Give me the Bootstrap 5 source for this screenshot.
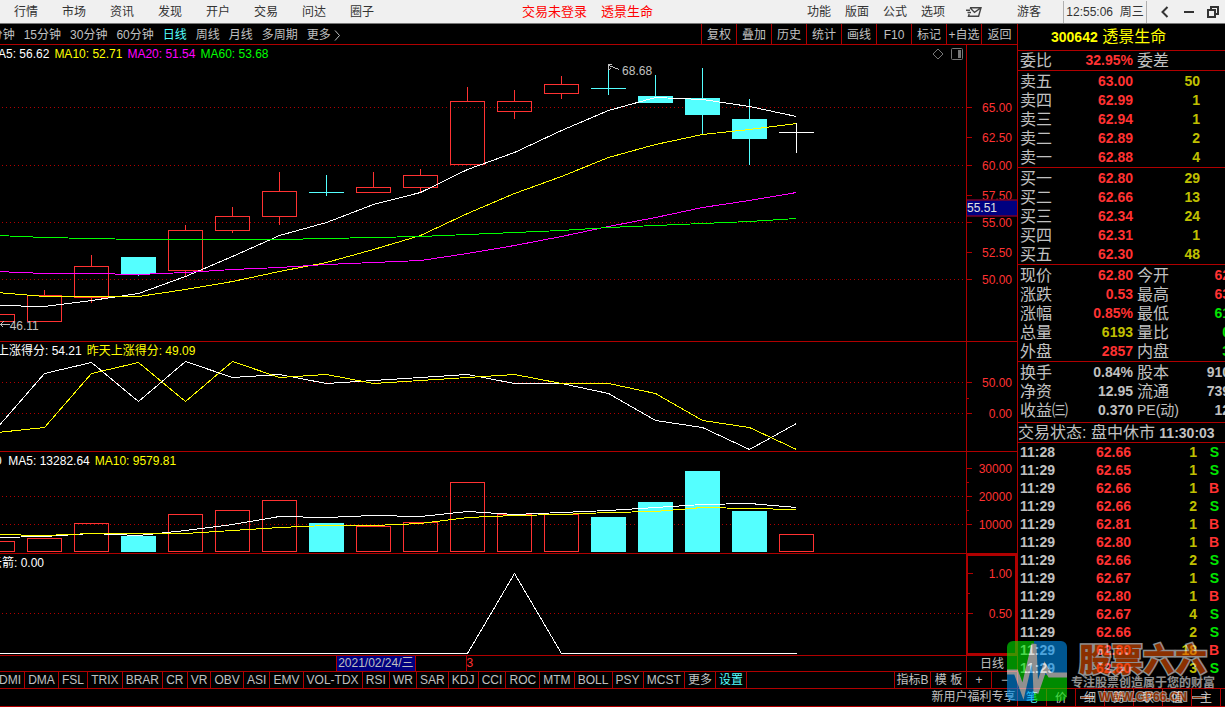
<!DOCTYPE html>
<html lang="zh-CN">
<head>
<meta charset="utf-8">
<meta name="viewport" content="width=device-width, initial-scale=1">
<title>300642 透景生命</title>
<link href="https://cdn.jsdelivr.net/npm/bootstrap@5.3.0/dist/css/bootstrap.min.css" rel="stylesheet">
<style>
:root { --line:#b00000; --up:#ff3232; --down:#54ffff; --txt:#c0c0c0; --vol:#c0c000; --lime:#00e600; }
body { background:#fff; color:var(--txt); font:12px/16px "Liberation Sans","Noto Sans CJK SC",sans-serif; }
button, a.tool { background:none; border:0; padding:0; color:inherit; font:inherit; text-decoration:none; white-space:nowrap; }
.app { height:100vh; min-height:560px; padding-bottom:2px; overflow:hidden; }
.topbar { height:24px; background:#f0f0f0; color:#333; border-bottom:1px solid #777; }
.topbar .menu { padding-left:2px; }
.topbar .menu button { width:48px; }
.topbar .tools { padding-left:11px; }
.topbar .tools button { width:38px; }
.topbar .tools .mail { width:43px; }
.topbar .tools .guest { width:68px; }
.topbar .notice { font-size:13px; color:#f00; gap:14px; }
.clock { width:84px; border:1px solid #b0b0b0; border-width:0 1px; height:22px; line-height:22px; }
.winctl { padding-left:6px; }
.topbar .winctl button { width:24px; }
.work { background:#000; min-height:0; }
.r-b { border-bottom:1px solid var(--line); }
.r-l { border-left:1px solid var(--line); }
.r-r { border-right:1px solid var(--line); }
.periods { height:21px; }
.periods button { padding-top:1px; }
.periods .span-list { gap:9px; margin-left:-16px; }
.cell35 { width:35px; }
.cell36 { width:36px; }
.picked { color:var(--down); }
.pane { min-height:0; position:relative; }
.pane-k { flex:296 1 0; } .pane-s { flex:109 1 0; } .pane-v { flex:101 1 0; }
.plot { position:relative; overflow:hidden; min-width:0; }
.plot svg.canvas { position:absolute; inset:0; width:100%; height:100%; display:block; }
.legend { position:relative; gap:5px; line-height:18px; white-space:nowrap; }
.axis { width:51px; }
.axis svg { display:block; width:100%; height:100%; }
.axis text { fill:var(--up); font-size:12px; text-anchor:end; }
.axis.focus-axis { border:2px solid var(--line); }
.tagged { position:absolute; transform:translateY(-50%); line-height:12px; }
.cursor-price { position:absolute; right:0; width:50px; height:17px; line-height:15px; background:#000080; border:1px solid var(--line); border-width:1px 0; color:#e0e0e0; transform:translateY(-50%); }
.corner { position:absolute; right:2px; top:3px; gap:7px; }
.dates { height:16px; }
.dates .mark-at { position:absolute; top:0; height:15px; line-height:15px; white-space:nowrap; }
.dates .chosen { background:#000080; padding:0 1px; }
.indis { height:17px; }
.indis .list { width:84%; margin-left:-4px; }
.indis .list button { flex:1 0 auto; padding:0 3px; border-right:1px solid var(--line); }
.w24 { width:24px; } .w25 { width:25px; } .w26 { width:26px; } .w50 { width:50px; } .w87 { width:87px; }
.foot { height:18px; }
.side { width:208px; flex:none; overflow:hidden; }
.side h1 { height:27px; font-size:16px; line-height:26px; color:#ff0; padding-left:33px; margin:0; font-weight:400; white-space:nowrap; }
.side h1 b, .side .num, .status b { font-size:14px; font-weight:700; }
.quotes { width:212px; table-layout:fixed; border-collapse:collapse; }
.quotes td, .quotes th { padding:0; height:19px; line-height:19px; font-size:16px; font-weight:400; vertical-align:middle; white-space:nowrap; }
.quotes .num { text-align:right; }
.quotes th { padding-left:2px; }
.quotes .second { padding-left:4px; }
.quotes .latin { font-size:14px; }
.box1 { padding-top:1px; } .box2 { padding:1px 0 2px; }
.status { height:20px; line-height:19px; font-size:16px; white-space:nowrap; }
.ticks { min-height:0; overflow:hidden; }
.ticks td { height:18px; line-height:18px; }
.ticks .num { padding-right:3px; }
.ticks .num.first { text-align:left; padding-left:2px; }
.up { color:var(--up); } .dn { color:var(--lime); } .vo { color:var(--vol); }
.tabs7 button { width:29px; border-right:1px solid var(--line); }
.wm { position:absolute; right:10px; bottom:6px; opacity:.6; pointer-events:none; z-index:5; white-space:nowrap; }
.wm-name { font:900 32px/32px "Noto Sans CJK SC",sans-serif; color:#e85000; -webkit-text-stroke:3px #f0f0f0; paint-order:stroke fill; }
.wm-sub { font:700 12px/18px "Noto Sans CJK SC",sans-serif; color:#f0f0f0; }
.wm-url { font:700 12px/12px "Liberation Sans",sans-serif; color:#e85000; -webkit-text-stroke:2px #f0f0f0; paint-order:stroke fill; gap:5px; }
.wm-url i { width:14px; height:3px; background:#e85000; border:1px solid #f0f0f0; }
</style>
</head>
<body>
<div class="app d-flex flex-column position-relative">
  <header class="topbar d-flex align-items-center flex-shrink-0">
    <nav class="menu d-flex"><button>行情</button><button>市场</button><button>资讯</button><button>发现</button><button>开户</button><button>交易</button><button>问达</button><button>圈子</button></nav>
    <div class="notice flex-grow-1 d-flex justify-content-center"><button>交易未登录</button><button>透景生命</button></div>
    <div class="tools d-flex align-items-center">
      <button>功能</button><button>版面</button><button>公式</button><button>选项</button>
      <button class="mail" aria-label="消息"><svg width="16" height="10" viewBox="0 0 16 10" fill="none" stroke="#444" stroke-width="1.4"><path d="M4 .8H15L12.600 9.200H2.500L3.200 7M4 .8L8.500 5.400L15 .8M0 3.200H4M1.500 5.500H5"/></svg></button>
      <button class="guest">游客</button>
    </div>
    <div class="clock text-center">12:55:06&nbsp; 周三</div>
    <div class="winctl d-flex">
      <button aria-label="返回"><svg width="8" height="12" viewBox="0 0 8 12" fill="none" stroke="#333" stroke-width="2"><path d="M6.500 1L1.500 6L6.500 11"/></svg></button>
      <button aria-label="最小化"><svg width="10" height="12" viewBox="0 0 10 12"><path d="M0 5H10V7H0Z" fill="#333"/></svg></button>
      <button aria-label="还原"><svg width="12" height="12" viewBox="0 0 12 12" fill="none" stroke="#333" stroke-width="2"><path d="M1 4H8V11H1ZM4 4V1H11V8H8"/></svg></button>
    </div>
  </header>

  <div class="work d-flex flex-grow-1">
    <main class="d-flex flex-column flex-grow-1" style="min-width:0">
      <div class="periods r-b d-flex overflow-hidden">
        <div class="span-list d-flex flex-grow-1">
          <button>5分钟</button><button>15分钟</button><button>30分钟</button><button>60分钟</button><button class="picked">日线</button><button>周线</button><button>月线</button><button>多周期</button><button>更多 <svg width="7" height="11" viewBox="0 0 7 11" fill="none" stroke="#c0c0c0"><path d="M1 .5L5.500 5.500L1 10.500"/></svg></button>
        </div>
        <button class="cell35 r-l">复权</button><button class="cell35 r-l">叠加</button><button class="cell35 r-l">历史</button><button class="cell35 r-l">统计</button><button class="cell35 r-l">画线</button><button class="cell35 r-l">F10</button><button class="cell35 r-l">标记</button><button class="cell35 r-l">+自选</button><button class="cell36 r-l">返回</button>
      </div>

      <section class="pane pane-k r-b d-flex">
        <div class="plot flex-grow-1">
          <svg class="canvas" id="kline"></svg>
          <div class="legend d-flex" style="margin-left:-12px"><span style="color:#fff">MA5: 56.62</span><span style="color:#ff0">MA10: 52.71</span><span style="color:#f0f">MA20: 51.54</span><span style="color:#0f0">MA60: 53.68</span></div>
          <span class="tagged" style="left:64.4%;top:8.8%">68.68</span>
          <span class="tagged" style="left:1%;top:94.9%">46.11</span>
          <div class="corner d-flex">
            <svg width="12" height="12" viewBox="0 0 12 12" fill="none" stroke="#777"><path d="M6 1L11 6L6 11L1 6Z"/></svg>
            <svg width="13" height="12" viewBox="0 0 13 12" fill="none" stroke="#777"><rect x=".5" y=".5" width="11" height="11" rx="1"/><path d="M7 2H10V10H7Z" fill="#777" stroke="none"/></svg>
          </div>
        </div>
        <div class="axis r-l" id="kline-axis"></div>
        <div class="cursor-price" style="top:55.1%">55.51</div>
      </section>
      <section class="pane pane-s r-b d-flex">
        <div class="plot flex-grow-1">
          <svg class="canvas" id="score"></svg>
          <div class="legend d-flex" style="margin-left:-3px"><span style="color:#fff">上涨得分: 54.21</span><span style="color:#ff0">昨天上涨得分: 49.09</span></div>
        </div>
        <div class="axis r-l" id="score-axis"></div>
      </section>
      <section class="pane pane-v r-b d-flex">
        <div class="plot flex-grow-1">
          <svg class="canvas" id="volume"></svg>
          <div class="legend d-flex" style="margin-left:-5px"><span style="color:#fff">0 &nbsp;MA5: 13282.64</span><span style="color:#ff0">MA10: 9579.81</span></div>
        </div>
        <div class="axis r-l" id="volume-axis"></div>
      </section>
      <section class="pane pane-v r-b d-flex">
        <div class="plot flex-grow-1">
          <svg class="canvas" id="arrow"></svg>
          <div class="legend d-flex" style="margin-left:-10px"><span style="color:#fff">云箭: 0.00</span></div>
        </div>
        <div class="axis focus-axis" id="arrow-axis"></div>
      </section>

      <div class="dates r-b d-flex">
        <div class="position-relative flex-grow-1">
          <span class="mark-at chosen r-l r-r" style="left:34.8%">2021/02/24/三</span>
          <span class="mark-at r-l up" style="left:48.2%">3</span>
        </div>
        <button class="axis r-l">日线</button>
      </div>
      <div class="indis r-b d-flex">
        <div class="flex-grow-1 overflow-hidden d-flex"><div class="list d-flex" id="indis"></div></div>
        <button class="cell36 r-l">指标B</button><button class="cell36 r-l">模 板</button><button class="w25 r-l">+</button><button class="w26 r-l">−</button>
      </div>
      <div class="foot r-b d-flex justify-content-end"><a class="tool w87 r-l text-center" href="#gift">新用户福利专享</a></div>
    </main>

    <aside class="side r-l d-flex flex-column">
      <h1 class="r-b"><b>300642</b> 透景生命</h1>
      <div class="r-b"><table class="quotes" id="ratio"></table></div>
      <div class="r-b box1"><table class="quotes" id="asks"></table></div>
      <div class="r-b box1"><table class="quotes" id="bids"></table></div>
      <div class="r-b box1"><table class="quotes" id="today"></table></div>
      <div class="r-b box2"><table class="quotes" id="basics"></table></div>
      <div class="status r-b">交易状态: 盘中休市 <b>11:30:03</b></div>
      <div class="ticks r-b flex-grow-1"><table class="quotes" id="ticks"></table></div>
      <div class="foot tabs7 r-b d-flex flex-shrink-0"><button class="picked">笔</button><button>价</button><button>细</button><button>势</button><button>联</button><button>值</button><button>主</button></div>
    </aside>
  </div>

  <div class="wm d-flex align-items-start">
    <svg width="60" height="60" viewBox="0 0 60 60">
      <defs><clipPath id="round"><rect width="60" height="60" rx="6"/></clipPath></defs>
      <g clip-path="url(#round)">
        <path d="M0 0H27V31H0Z" fill="#00e800"/><path d="M27 0H60V34H27Z" fill="#0090f0"/>
        <path d="M0 31H9L16 52L27 4V60H0Z" fill="#0090f0"/><path d="M9 29L16 48L27 4V0H9Z" fill="#00e800"/>
        <path d="M27 34H60V60H27Z" fill="#00e800"/>
        <path d="M27 4L30 50L38 26L44 34H27Z" fill="#0090f0"/>
        <path d="M0 31H9L16 50L27 3L29 52L38 26L43 34H60" fill="none" stroke="#f0f0f0" stroke-width="5"/>
      </g>
    </svg>
    <div class="d-flex flex-column align-items-center ps-1">
      <div class="wm-name">股票六六</div><div class="wm-sub">专注股票创造属于您的财富</div>
      <div class="wm-url d-flex align-items-center"><i></i><span>WWW.GP66.CN</span><i></i></div>
    </div>
  </div>
</div>

<script src="https://cdn.jsdelivr.net/npm/bootstrap@5.3.0/dist/js/bootstrap.bundle.min.js"></script>
<script>
const UP = '#ff3232', DOWN = '#54ffff', LINE = '#b00000', W = 966, STEP = 47, FIRST = -3;
const at = i => FIRST + i * STEP;
const $ = id => document.getElementById(id);
const fx = 'vector-effect="non-scaling-stroke"';

/* a study line, one value for each trading day */
const study = (ys, colour) => `<polyline ${fx} fill="none" stroke="${colour}" points="${ys.map((y, i) => at(i) + ',' + y).join(' ')}"/>`;
const stroke = (x1, y1, x2, y2, colour) => `<path ${fx} stroke="${colour}" d="M${x1} ${y1}L${x2} ${y2}"/>`;

function body(x, top, bottom, kind) {
  if (kind === 'd') return `<rect x="${x - 17.5}" y="${top - .5}" width="35" height="${bottom - top + 1}" fill="${DOWN}"/>`;
  return `<rect ${fx} x="${x - 17}" y="${top}" width="34" height="${bottom - top}" fill="none" stroke="${UP}"/>`;
}
function paint(id, top, height, grid, marks) {
  const svg = $(id);
  svg.setAttribute('viewBox', `0 ${top} ${W} ${height}`);
  svg.setAttribute('preserveAspectRatio', 'none');
  svg.innerHTML = `<g transform="translate(.5 .5)" shape-rendering="crispEdges">` +
    grid.map(y => `<path ${fx} stroke="${LINE}" stroke-dasharray="1 3" d="M1.5 ${y}H964"/>`).join('') + marks + '</g>';
}
function axis(id, top, height, labels, halves) {
  $(id).innerHTML = '<svg shape-rendering="crispEdges">' +
    labels.map(([t, y]) => { const p = (y + .5 - top) / height * 100; return `<line x1="0" x2="5" y1="${p}%" y2="${p}%" stroke="${LINE}"/><text x="${id === 'arrow-axis' ? 44 : 45}" y="${p}%" dy="4">${t}</text>`; }).join('') +
    halves.map(y => { const p = (y + .5 - top) / height * 100; return `<line x1="0" x2="2" y1="${p}%" y2="${p}%" stroke="${LINE}"/>`; }).join('') + '</svg>';
}

/* high, top, bottom, low, kind: u = rise, d = fall, c = cross, w = level */
const days = [
  [314,314,321,321,'u'],[290,295,321,321,'u'],[255,266,297,302,'u'],[257,257,273,275,'d'],[225,230,270,275,'u'],[207,216,230,232,'u'],
  [172,191,216,224,'u'],[175,192,192,195,'c'],[172,187,192,192,'u'],[169,175,187,191,'u'],[87,101,164,164,'u'],[90,101,111,118,'u'],
  [76,84,93,98,'u'],[65,88,88,94,'c'],[75,96,102,102,'d'],[68,98,114,134,'d'],[99,119,138,164,'d'],[123,132,132,152,'w']];
const candles = days.map(([h, t, b, l, k], i) => {
  const x = at(i), c = k === 'u' ? UP : k === 'w' ? '#fff' : DOWN;
  let s = '';
  if (k === 'c' || k === 'w') return stroke(x - 17.5, t, x + 17.5, t, c) + stroke(x, h - .5, x, l + .5, c);
  if (h < t) s += stroke(x, h - .5, x, t, c);
  if (l > b) s += stroke(x, b, x, l + .5, c);
  return s + body(x, t, b, k);
}).join('');
paint('kline', 45, 296, [107,165,222,279], candles +
  study([305,306,300,293,276,256,235,222,204,192,169,152,130,110,97,99,106,116], '#fff') +
  study([292,296,296,296,289,281,271,262,249,235,213,193,176,157,144,134,129,123], '#ff0') +
  study([271,273,273,274,272,269,267,264,262,260,253,245,236,226,217,207,200,192], '#f0f') +
  study([235,237,238,239,239,239,239,238,237,236,234,232,230,227,225,223,221,218], '#0f0') +
  `<path ${fx} fill="none" stroke="#c0c0c0" d="M611 64H608V69L611 68M608 65L619 69M0 324H9M3 321L0 324L3 327"/>`);
axis('kline-axis', 45, 296, [['65.00',107],['62.50',137],['60.00',165],['57.50',195],['55.00',222],['52.50',252],['50.00',279]], []);

const score = [427,373,362,401,361,377,374,383,380,377,374,383,383,393,420,427,449,423];
paint('score', 342, 109, [382,413], study(score, '#fff') + study([432].concat(score.slice(0, -1)), '#ff0'));
axis('score-axis', 342, 109, [['50.00',382],['0.00',413]], [398]);

const vols = [541,538,523,536,514,510,500,523,526,522,482,514,514,517,502,471,511,534];
paint('volume', 452, 101, [496,524], vols.map((v, i) => body(at(i), v, 551, days[i][4] === 'c' || days[i][4] === 'd' ? 'd' : 'u')).join('') +
  study([537,536,533,535,530,524,516,517,515,516,511,514,512,510,507,504,503,507], '#fff') +
  study([534,535,533,533,533,530,527,525,525,523,517,515,514,512,511,507,508,509], '#ff0'));
axis('volume-axis', 452, 101, [['30000',468],['20000',496],['10000',524]], [482,510]);

paint('arrow', 554, 101, [613], study(days.map((d, i) => i === 11 ? 573 : 653), '#fff'));
axis('arrow-axis', 556, 97, [['1.00',573],['0.50',613]], [593]);

$('indis').innerHTML = 'DMI DMA FSL TRIX BRAR CR VR OBV ASI EMV VOL-TDX RSI WR SAR KDJ CCI ROC MTM BOLL PSY MCST 更多 设置'.split(' ')
  .map(n => `<button${n === '设置' ? ' class="picked"' : ''}>${n}</button>`).join('');

/* order book and quote tables */
const cols = ws => '<colgroup>' + ws.map(w => `<col style="width:${w}px">`).join('') + '<col></colgroup>';
const book = (id, rows) => $(id).innerHTML = cols([50, 65, 67]) + rows.map(([n, p, q]) =>
  `<tr><th scope="row">${n}</th><td class="num up">${p}</td><td class="num vo">${q}</td><td></td></tr>`).join('');
book('asks', [['卖五','63.00',50],['卖四','62.99',1],['卖三','62.94',1],['卖二','62.89',2],['卖一','62.88',4]]);
book('bids', [['买一','62.80',29],['买二','62.66',13],['买三','62.34',24],['买四','62.31',1],['买五','62.30',48]]);
const pair = (id, rows) => $(id).innerHTML = cols([50, 65, 52]) + rows.map(([a, v, c, b, w, e]) =>
  `<tr><th scope="row">${a}</th><td class="num ${c}">${v}</td><th scope="row" class="second${b[0] === 'P' ? ' latin' : ''}">${b}</th><td class="num ${e}">${w}</td></tr>`).join('');
pair('ratio', [['委比','32.95%','up','委差','','']]);
pair('today', [['现价','62.80','up','今开','62','up'],['涨跌','0.53','up','最高','63','up'],['涨幅','0.85%','up','最低','61','dn'],['总量','6193','vo','量比','0','dn'],['外盘','2857','up','内盘','3','dn']]);
pair('basics', [['换手','0.84%','','股本','910',''],['净资','12.95','','流通','739',''],['收益㈢','0.370','','PE(动)','12','']]);
$('ticks').innerHTML = cols([50, 66, 66, 22]) + [['11:28','62.66',1,'S'],['11:29','62.65',1,'S'],['11:29','62.66',1,'B'],['11:29','62.66',2,'S'],['11:29','62.81',1,'B'],['11:29','62.80',1,'B'],['11:29','62.66',2,'S'],['11:29','62.67',1,'S'],['11:29','62.80',1,'B'],['11:29','62.67',4,'S'],['11:29','62.66',2,'S'],['11:29','62.80',18,'B'],['11:29','62.80',3,'S']]
  .map(([t, p, q, f]) => `<tr><td class="num first">${t}</td><td class="num up">${p}</td><td class="num vo">${q}</td><td class="num ${f === 'S' ? 'dn' : 'up'}">${f}</td><td></td></tr>`).join('');
</script>
</body>
</html>
